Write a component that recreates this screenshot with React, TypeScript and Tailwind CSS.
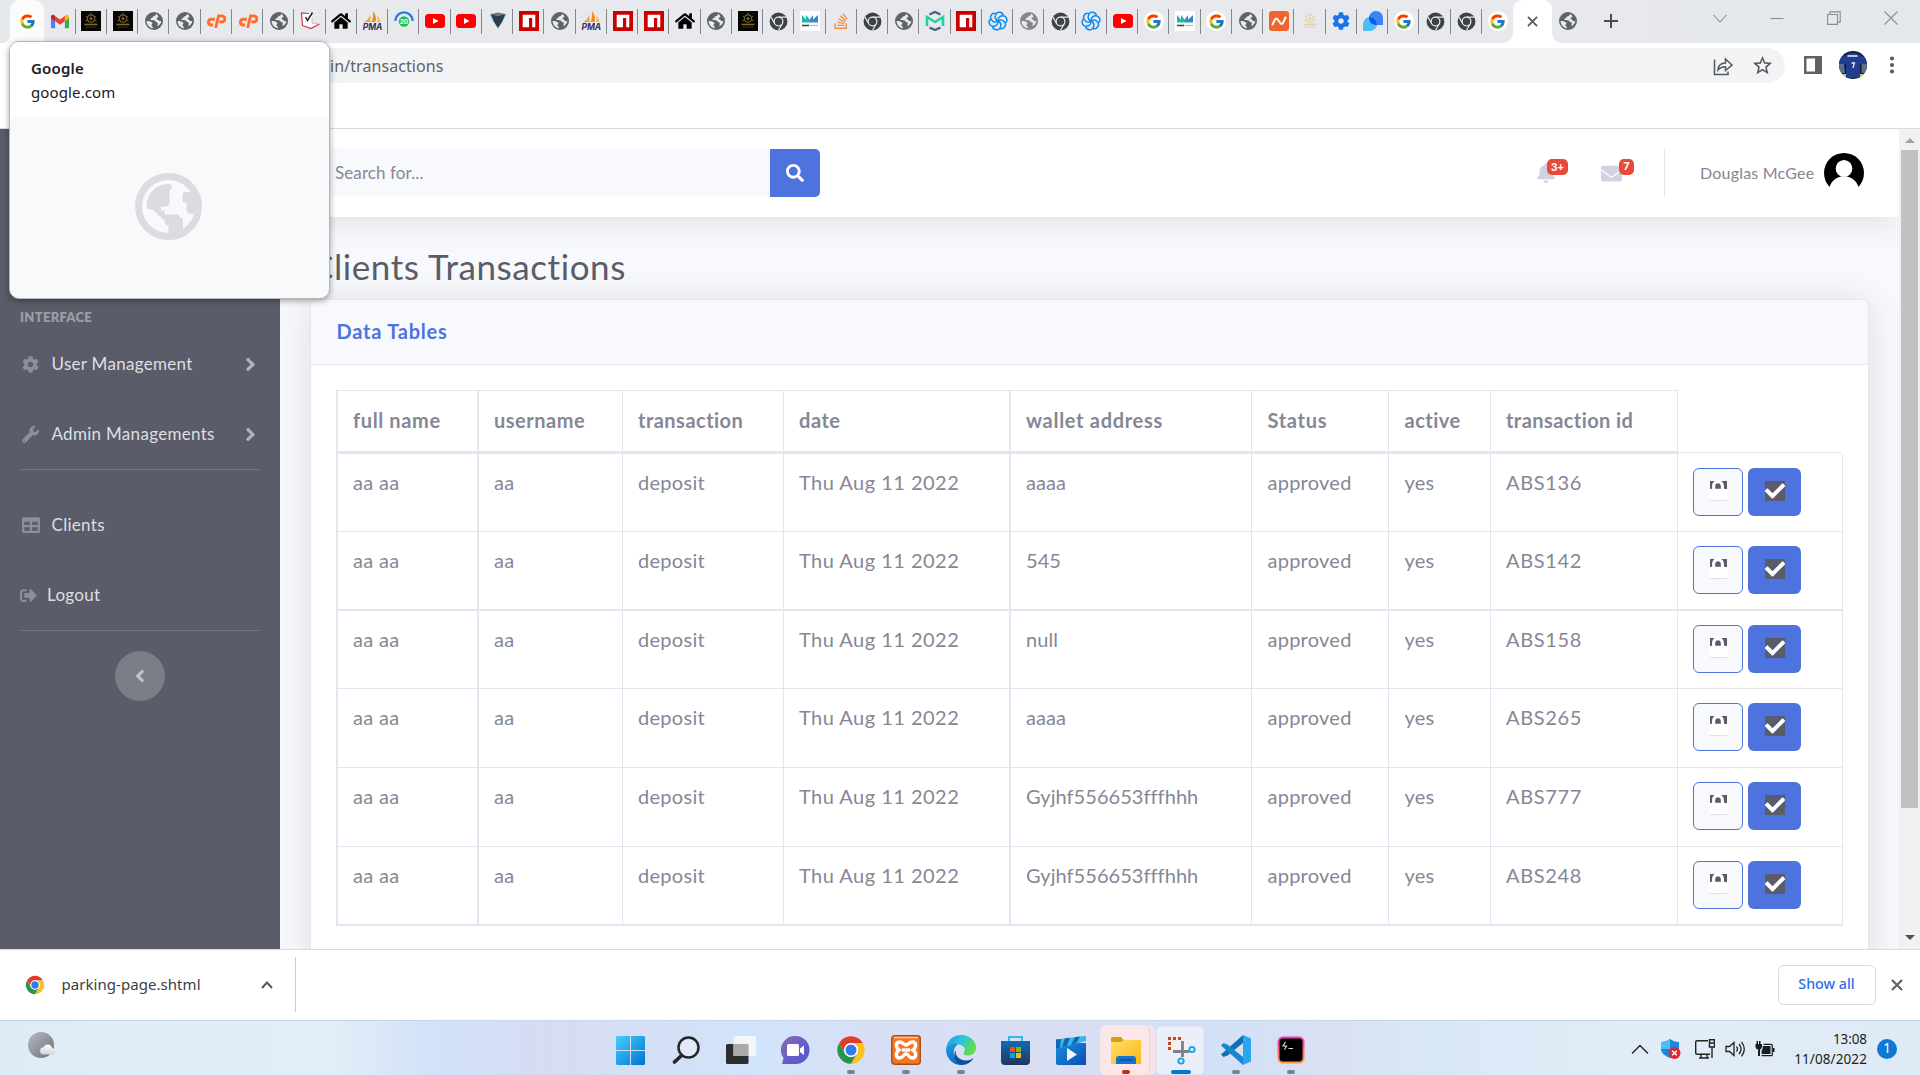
import React from "react";
import {
  FaAngleLeft,
  FaAngleRight,
  FaBell,
  FaCheck,
  FaCog,
  FaEnvelope,
  FaHome,
  FaLock,
  FaSearch,
  FaSignOutAlt,
  FaStackOverflow,
  FaTable,
  FaWrench,
} from "react-icons/fa";
import { FcGoogle } from "react-icons/fc";
import { MdStarBorder } from "react-icons/md";

/* ---------- favicons ---------- */

function Globe({ color = "#5f6368" }: { color?: string }) {
  return (
    <svg viewBox="0 0 20 20" className="size-5">
      <circle cx="10" cy="10" r="9" fill={color} />
      <path
        d="M12.2 2.8c-.2 1.6-1.3 2.4-2.9 2.6-.8.2-.9.9-.8 1.7-1.6-.1-2.3.8-1.9 2 1.9.4 4.3-.1 5 1.4.6.9 1.500.5 2 1.200.8.9-.3 2.300-.3 3.600 2.500-1.200 3.900-3.100 4-5.500-1 .7-2.300.5-2.700-.5-.5-1.200-1.900-.6-2-1.900 0-1 1-1.200 1.900-1.200C14.300 5 13.500 3.500 12.200 2.800zM2.600 10c1.800-.2 4.800.5 5.600 1.500.7 1-.6 1.800-.8 2.800-.1.900 1.400.9 1.800 2.900C5.500 17 2.700 14 2.600 10z"
        fill="#e8eaed"
      />
    </svg>
  );
}

function Gmail() {
  return (
    <svg viewBox="0 0 24 18" className="h-[15px] w-[18px]">
      <path d="M0 2.500V16.500A1.500 1.500 0 0 0 1.500 18H5.500V8z" fill="#4285f4" />
      <path d="M24 2.500V16.500A1.500 1.500 0 0 1 22.500 18H18.500V8z" fill="#34a853" />
      <path d="M18.500 1.500V8.500L24 4.400V2.500C24 .2 21.400-.8 19.800.5z" fill="#fbbc04" />
      <path d="M5.500 8.500V1.500L12 6.400 18.500 1.500V8.500L12 13.400z" fill="#ea4335" />
      <path d="M0 2.500V4.400L5.500 8.500V1.500L4.200.5C2.600-.8 0 .2 0 2.500z" fill="#c5221f" />
    </svg>
  );
}

function Emblem({ faint = false }: { faint?: boolean }) {
  const c = faint ? "#e3d3a4" : "#7d652a";
  return (
    <svg viewBox="0 0 20 20" className="size-5">
      {!faint && <rect width="20" height="20" fill="#050505" />}
      <circle cx="10" cy="7.500" r="3.700" fill="none" stroke={c} strokeWidth="1.200" />
      <circle cx="10" cy="7.500" r="1.500" fill={c} />
      <path d="M10 1.500v2M5 5l1 1M15 5l-1 1M4.500 10l1.500-.8M15.500 10l-1.500-.8" stroke={c} strokeWidth="1" />
      <path d="M3.500 13.500h13" stroke={c} strokeWidth="1.600" />
      <path d="M5 16.200h10" stroke={faint ? "#ecc9bd" : "#3d3218"} strokeWidth="1" />
    </svg>
  );
}

function Cpanel() {
  return (
    <svg viewBox="0 0 20 14" className="h-[14px] w-[20px]" fill="none" stroke="#ff6c2c" strokeWidth="2.900">
      <path d="M8.800 5.300H5.300A2.900 2.900 0 0 0 4.600 11H7" />
      <path d="M9.600 14L12.600 1.900H15.500A2.900 2.900 0 0 1 16.200 7.900H13.200" />
    </svg>
  );
}

function ListCheck() {
  return (
    <svg viewBox="0 0 20 20" className="size-5">
      <path d="M1.500 2h10.500v11l7.500-1-8 4.500-9-1z" fill="#fff" />
      <path d="M9 2.500L1.500 2l1 12.500 8.500 3 8.500-4.500" fill="none" stroke="#c8404a" strokeWidth="1.200" />
      <path d="M12 7v5l6 .500" fill="none" stroke="#dba5aa" strokeWidth=".8" />
      <path d="M5.500 6l2 3.500L12.500 1.500" fill="none" stroke="#222" strokeWidth="1.500" />
    </svg>
  );
}

function Pma() {
  return (
    <div className="flex h-[20px] w-[20px] flex-col items-center">
      <svg viewBox="0 0 20 13" className="h-[12px] w-[19px]">
        <path d="M7.500 0c.5 4-.5 8-6.500 12.500 3-.8 5-.8 7-.4z" fill="#f9a13a" />
        <path d="M10.500 0C13 3 15 8 13 12c-1.500-.4-3-.2-4 .2C10.500 8 11 4 10.500 0z" fill="#f28a1d" />
        <path d="M14.500 4c2.500 2.500 4 5.500 4 8.500-1-.5-2-.7-3.500-.5 1-3 .5-5.500-.5-8z" fill="#f9b25c" />
      </svg>
      <span className="font-[Inter] text-[8.500px] leading-[8px] font-bold text-[#33305e] italic">PMA</span>
    </div>
  );
}

function Ring() {
  return (
    <svg viewBox="0 0 20 20" className="size-5">
      <path d="M1.300 10A8.700 8.700 0 0 1 18.700 10" fill="none" stroke="#2c7be5" strokeWidth="2.300" />
      <circle cx="10" cy="10.500" r="5.200" fill="#1fbf4d" />
      <text x="10" y="12.900" textAnchor="middle" fontSize="6.500" fontWeight="700" fontFamily="Inter" fill="#fff">
        20
      </text>
    </svg>
  );
}

function Youtube() {
  return (
    <svg viewBox="0 0 20 20" className="size-5">
      <rect y="3" width="20" height="14" rx="3.500" fill="#f00" />
      <path d="M8 7l5.500 3L8 13z" fill="#fff" />
    </svg>
  );
}

function Gem() {
  return (
    <svg viewBox="0 0 20 20" className="size-5">
      <path d="M1 3.500L10 19 19 3.500z" fill="#a5e6ec" />
      <path d="M2.500 3L10 1.500 17.500 3 10 5z" fill="#6e7784" />
      <path d="M2.500 3L10 5l7.500-2L14 11l-4 6-4-6z" fill="#2e3a4e" />
    </svg>
  );
}

function Npm() {
  return (
    <svg viewBox="0 0 20 20" className="size-5">
      <rect width="20" height="20" fill="#cb0000" />
      <path d="M3.700 3.700h12.600v12.600h-3.100V7H10v9.300H3.700z" fill="#fff" />
    </svg>
  );
}

function ChromeMono() {
  return (
    <svg viewBox="0 0 48 48" className="size-[19px]">
      <circle cx="24" cy="24" r="22.500" fill="#3f4245" />
      <path d="M24 13h20M14.500 29.500l-9.500-16.500M33.500 29.500L24 46" stroke="#e8eaed" strokeWidth="3" />
      <circle cx="24" cy="24" r="11" fill="#3f4245" stroke="#e8eaed" strokeWidth="3.200" />
    </svg>
  );
}

function Chrome({ className }: { className: string }) {
  return (
    <svg viewBox="0 0 48 48" className={className}>
      <path d="M4.950 13A22 22 0 0 1 43.050 13H24A11 11 0 0 0 14.470 29.500Z" fill="#e33b2e" />
      <path d="M43.050 13A22 22 0 0 1 24 46L33.530 29.500A11 11 0 0 0 24 13Z" fill="#fcc31e" />
      <path d="M24 46A22 22 0 0 1 4.950 13L14.470 29.500A11 11 0 0 0 33.530 29.500Z" fill="#26964a" />
      <circle cx="24" cy="24" r="11.300" fill="#fff" />
      <circle cx="24" cy="24" r="8.800" fill="#2e7cee" />
    </svg>
  );
}

function Mailer() {
  return (
    <svg viewBox="0 0 20 20" className="size-5">
      <rect width="20" height="20" fill="#fff" />
      <path d="M2 4l4 4.500V4l4 5v2.500H2z" fill="#23b5a5" />
      <path d="M10 11.500V8l3-4v4.500L18 4v7.500z" fill="#3d86c6" />
      <path d="M2 14.500h7" stroke="#444" strokeWidth="1.600" />
      <path d="M9.500 14.500H18" stroke="#8ac9c0" strokeWidth="1.200" />
    </svg>
  );
}

function MailTrap() {
  return (
    <svg viewBox="0 0 20 20" className="size-5">
      <path d="M4.500 3.500L10 1l5.500 2.500M4.500 16.500L10 19l5.500-2.500" fill="none" stroke="#4d6180" strokeWidth="2.400" />
      <path d="M2 15V6l8 5 8-5v9" fill="none" stroke="#22d3a0" strokeWidth="2.600" />
    </svg>
  );
}

function Swirl() {
  return (
    <svg viewBox="0 0 20 20" className="size-5">
      {[0, 60, 120, 180, 240, 300].map((a) => (
        <path
          key={a}
          d="M10 10C6.500 8.500 6 4 9.500 1.500c3.500-.8 5.500 1 6 3"
          transform={`rotate(${a} 10 10)`}
          fill="none"
          stroke="#0b8df0"
          strokeWidth="1.500"
        />
      ))}
    </svg>
  );
}

function Google() {
  return (
    <div className="flex size-5 items-center justify-center rounded-full bg-white">
      <FcGoogle className="size-[17px]" />
    </div>
  );
}

function Orange() {
  return (
    <svg viewBox="0 0 20 20" className="size-5">
      <rect width="20" height="20" rx="3" fill="#f0642d" />
      <path
        d="M3.500 13.500L6 8.500Q7.300 6.300 8.700 8.500L11.300 12Q12.700 14 14 12L16.500 6.500"
        fill="none"
        stroke="#fff"
        strokeWidth="2"
        strokeLinecap="round"
      />
    </svg>
  );
}

function Drops() {
  return (
    <svg viewBox="0 0 20 20" className="size-5">
      <path d="M6 8A7 7 0 0 1 13 0c4 0 7 3 7 7v7h-7C9 14 6 11 6 8z" fill="#3f84f5" />
      <path d="M0 20v-7a7 7 0 0 1 7-7c4 0 7 3 7 7s-3 7-7 7z" fill="#4dbdfa" />
      <path d="M6 6.100c4-.6 8 2.500 8 7.900h-1c-4 0-7.500-3-7-7.900z" fill="#0e5bea" />
    </svg>
  );
}

const home = <FaHome className="size-5 text-black" />;
const stack = <FaStackOverflow className="size-[18px] text-[#ef9148]" />;
const gear = <FaCog className="size-[18px] text-[#1a73e8]" />;

const favicons: React.ReactNode[] = [
  <Gmail />, <Emblem />, <Emblem />, <Globe />, <Globe />, <Cpanel />, <Cpanel />, <Globe />, <ListCheck />, home,
  <Pma />, <Ring />, <Youtube />, <Youtube />, <Gem />, <Npm />, <Globe />, <Pma />, <Npm />, <Npm />,
  home, <Globe />, <Emblem />, <ChromeMono />, <Mailer />, stack, <ChromeMono />, <Globe />, <MailTrap />, <Npm />,
  <Swirl />, <Globe color="#85878a" />, <ChromeMono />, <Swirl />, <Youtube />, <Google />, <Mailer />, <Google />, <Globe />, <Orange />,
  <Emblem faint />, gear, <Drops />, <Google />, <ChromeMono />, <ChromeMono />, <Google />,
];

function TabStrip() {
  return (
    <div className="flex h-[43px] shrink-0 bg-gradient-to-r from-[#e8e9ed] from-80% to-[#e4e8eb] to-95%">
      <div className="flex h-[43px] w-[10px] items-end bg-[#fbfbfc]">
        <div className="h-full w-[10px] rounded-br-lg bg-[#e5e8eb]" />
      </div>
      <div className="flex w-[34.400px] items-start justify-center rounded-t-[10px] bg-[#fbfbfc] pt-[11px]">
        <Google />
      </div>
      <div className="flex h-[43px]">
        {favicons.map((icon, i) => (
          <div key={i} className="relative flex h-[42px] w-[31.250px] items-center justify-center">
            {icon}
            {i < favicons.length - 1 && <span className="absolute top-[9px] right-0 h-[25px] w-px bg-[#84878b]" />}
          </div>
        ))}
      </div>
      <div className="relative flex w-[39px] items-center justify-center rounded-t-[9px] bg-white">
        <svg viewBox="0 0 12 12" className="size-[11px]">
          <path d="M1 1l10 10M11 1L1 11" stroke="#55585c" strokeWidth="1.900" />
        </svg>
        <svg viewBox="0 0 10 10" className="absolute bottom-0 -left-[10px] size-[10px]">
          <path d="M10 0v10H0A10 10 0 0 0 10 0z" fill="#fff" />
        </svg>
        <svg viewBox="0 0 10 10" className="absolute -right-[10px] bottom-0 size-[10px]">
          <path d="M0 0v10h10A10 10 0 0 1 0 0z" fill="#fff" />
        </svg>
      </div>
      <div className="flex h-[42px] w-[32px] items-center justify-center">
        <Globe />
      </div>
      <div className="flex h-[42px] w-[54px] items-center justify-center">
        <svg viewBox="0 0 16 16" className="size-[16px]">
          <path d="M8 1v14M1 8h14" stroke="#4a4d51" strokeWidth="2" />
        </svg>
      </div>
      <div className="ml-auto flex items-start gap-[43px] pt-[11px] pr-[22px] text-[#8b8e91]">
        <svg viewBox="0 0 14 14" className="size-[14px]" fill="none" stroke="currentColor" strokeWidth="1.100">
          <path d="M.5 4l6.500 7 6.500-7" />
        </svg>
        <svg viewBox="0 0 14 14" className="size-[14px]" fill="none" stroke="currentColor" strokeWidth="1.100">
          <path d="M.5 7.500h13" />
        </svg>
        <svg viewBox="0 0 14 14" className="size-[14px]" fill="none" stroke="currentColor" strokeWidth="1.100">
          <path d="M.6 3.500h9.900v9.900H.6zM3 3.400V.9h10.200v10.200h-2.500" />
        </svg>
        <svg viewBox="0 0 14 14" className="size-[14px]" fill="none" stroke="currentColor" strokeWidth="1.100">
          <path d="M.5.5l13 13M13.500.5l-13 13" />
        </svg>
      </div>
    </div>
  );
}

function Toolbar() {
  return (
    <div className="flex h-[86px] shrink-0 items-start border-b border-[#d9dadd] bg-white pt-[5px]">
      <div className="ml-[120px] flex h-[35px] w-[1665px] items-center justify-between rounded-full bg-[#f1f3f4] pr-[11px] pl-[210px] font-['Noto_Sans']">
        <span className="text-[16px] tracking-[0.080px] text-[#5f6368]">in/transactions</span>
        <span className="flex items-center gap-[18px] text-[#54575b]">
          <svg viewBox="0 0 20 20" className="size-[20px]" fill="none" stroke="currentColor" strokeWidth="1.500">
            <path d="M1.500 3.500v15H15V15.500" />
            <path d="M5 14c.3-4.500 3-7 7.500-7V3l6.500 6-6.500 5.500v-3.800C9 10.600 7 11.600 5 14z" />
          </svg>
          <MdStarBorder className="size-[23px]" />
        </span>
      </div>
      <svg viewBox="0 0 18 18" className="mt-[8px] ml-[19px] size-[18px]">
        <path d="M0 0h18v18H0zM2.500 2.500v13h8.500v-13z" fill="#5f6368" fillRule="evenodd" />
      </svg>
      <svg viewBox="0 0 28 28" className="mt-[3px] ml-[17px] size-[28px]">
        <clipPath id="face">
          <circle cx="14" cy="14" r="14" />
        </clipPath>
        <g clipPath="url(#face)">
          <rect width="28" height="28" fill="#101c33" />
          <path d="M0 13l1-6 6-3 3-2h7l4 2 5 3 2 6-3 1-4-1v14H7V13l-4 1z" fill="#213d8f" />
          <path d="M0 13l5 0 1 9-6 0zM22.500 13h5.500v9h-5.500z" fill="#5a6f8a" />
          <path d="M0 23h7v5H0zM21 23h7v5h-7z" fill="#cdd07a" />
          <path d="M8.500 5h10" stroke="#b9c5e6" strokeWidth="1.800" />
          <path d="M12.500 12h3l-1.700 5" fill="none" stroke="#e9edf8" strokeWidth="1.300" />
        </g>
      </svg>
      <svg viewBox="0 0 6 18" className="mt-[8px] ml-[22px] h-[18px] w-[6px]" fill="#5a5d61">
        <circle cx="3" cy="2.500" r="2.100" />
        <circle cx="3" cy="9" r="2.100" />
        <circle cx="3" cy="15.500" r="2.100" />
      </svg>
    </div>
  );
}

function TabPreview() {
  return (
    <div className="absolute top-[41px] left-[8.500px] flex h-[257.500px] w-[321.500px] flex-col overflow-hidden rounded-[10px] border border-[#b4b6b8] bg-[#f8f9fb] font-['Noto_Sans'] shadow-[0_2px_6px_rgba(0,0,0,0.35)]">
      <div className="flex h-[75px] flex-col bg-white pt-[14px] pl-[21.500px] text-[#202124]">
        <span className="text-[15px] leading-[24px] font-semibold tracking-[0.200px]">Google</span>
        <span className="text-[15px] leading-[25px] tracking-[0.120px]">google.com</span>
      </div>
      <div className="flex flex-1 items-center justify-center pr-[1px] pb-[1px]">
        <svg viewBox="-33.500 -33.500 67 67" className="size-[67px]" fill="#dadce0">
          <circle r="30" fill="none" stroke="#dadce0" strokeWidth="7" />
          <path d="M-1-22.500Q3.500-23 3.500-19Q3.500-17.500 1-16V-4Q1 0-3.500 0H-7.500V4H-5L-3 8H9Q11 8 11.500 11Q14.500 11 14.500 14V24L0 29V26.500V19Q-4 19-4 14L-16 3H-19Q-22 3-22-1C-21-14-12-22-1-22.500z" />
          <path d="M21-14.500H17Q14-14.500 14-11V-6Q14-3.500 18-3.500V3Q18 7.500 25 7.500L29 0 26-14z" />
        </svg>
      </div>
    </div>
  );
}

/* ---------- admin page ---------- */

const sideText = "text-[17px] leading-6 tracking-[0.300px] text-[#dedfe1] [font-variant-ligatures:none]";

function Sidebar() {
  return (
    <aside className="flex w-[280px] shrink-0 flex-col bg-[#5a5c69] px-5 pt-[178px] text-[#8d8e97]">
      <div className="h-[20px] text-[13px] leading-[20px] font-extrabold tracking-[0.280px] text-[#9c9da5]">INTERFACE</div>
      <div className="mt-[25px] flex h-6 items-center">
        <FaCog className="ml-[2px] size-[17px]" />
        <span className={sideText + " ml-[12.500px]"}>User Management</span>
        <FaAngleRight className="mr-px ml-auto size-[17px] scale-125 text-[#b0b1b7]" />
      </div>
      <div className="mt-[46px] flex h-6 items-center">
        <FaWrench className="ml-[2px] size-[17px]" />
        <span className={sideText + " ml-[12.500px]"}>Admin Managements</span>
        <FaAngleRight className="mr-px ml-auto size-[17px] scale-125 text-[#b0b1b7]" />
      </div>
      <div className="mt-[23px] h-px bg-[#757681]" />
      <div className="mt-[43px] flex h-6 items-center">
        <FaTable className="ml-[2px] size-[18px]" />
        <span className={sideText + " ml-[11.500px]"}>Clients</span>
      </div>
      <div className="mt-[46px] flex h-6 items-center">
        <FaSignOutAlt className="size-[17px]" />
        <span className={sideText + " ml-[10px]"}>Logout</span>
      </div>
      <div className="mt-[23px] h-px bg-[#757681]" />
      <div className="mt-[20px] flex size-[50px] items-center justify-center self-center rounded-full bg-[#7b7d87]">
        <FaAngleLeft className="mr-px size-[18px] scale-110 text-[#c3c4c9]" />
      </div>
    </aside>
  );
}

function Topbar() {
  return (
    <header className="relative flex h-[88px] shrink-0 items-center bg-white pr-[35px] shadow-[0_3px_34px_rgba(58,59,69,0.150)]">
      <div className="ml-[30px] flex h-[48px]">
        <div className="flex w-[460px] items-center bg-[#f8f9fc] pl-[25px] text-[17px] tracking-[0.100px] text-[#858796]">
          Search for...
        </div>
        <div className="flex w-[50px] items-center justify-center rounded-r-[5px] bg-[#4e73df]">
          <FaSearch className="size-[18px] text-white" />
        </div>
      </div>
      <div className="relative ml-auto w-[18px]">
        <FaBell className="-ml-px size-[20px] text-[#d1d3e2]" />
        <span className="absolute -top-[4px] left-[10px] flex h-[16px] w-[21px] items-center justify-center rounded-[5px] bg-[#e74a3b] text-[11px] font-black text-white">
          3+
        </span>
      </div>
      <div className="relative ml-[46px] w-[21px]">
        <FaEnvelope className="size-[21px] text-[#d1d3e2]" />
        <span className="absolute -top-[4px] left-[18px] flex h-[16px] w-[15px] items-center justify-center rounded-[5px] bg-[#e74a3b] text-[11px] font-black text-white">
          7
        </span>
      </div>
      <div className="ml-[42px] h-[48px] w-px bg-[#e3e6f0]" />
      <span className="ml-[35px] w-[124px] text-[16px] tracking-[0.200px] text-[#858796] [font-variant-ligatures:none]">Douglas McGee</span>
      <svg viewBox="0 0 40 40" className="size-[40px]">
        <clipPath id="avatar">
          <rect width="40" height="34" />
        </clipPath>
        <g clipPath="url(#avatar)">
          <circle cx="20" cy="20" r="20" fill="#000" />
          <ellipse cx="20" cy="15.500" rx="8.300" ry="8.600" fill="#fff" />
          <path d="M5.500 34C8 27 13.500 23.300 20 23.300S32 27 34.500 34v2h-29z" fill="#fff" />
        </g>
      </svg>
    </header>
  );
}

type Column = { w: string; head: string; track: string; headTrack: string };
const columns: Column[] = [
  { w: "w-[141px] border-l-2 pl-[15px]", head: "full name", track: "tracking-[0.350px]", headTrack: "tracking-[0.620px]" },
  { w: "w-[145px] border-l-2 pl-[15px]", head: "username", track: "tracking-[0.350px]", headTrack: "tracking-[0.500px]" },
  { w: "w-[161px] border-l pl-[15px]", head: "transaction", track: "tracking-[0.300px]", headTrack: "tracking-[0.480px]" },
  { w: "w-[226px] border-l pl-[15px]", head: "date", track: "tracking-[0.480px]", headTrack: "tracking-[0.550px]" },
  { w: "w-[242px] border-l-2 pl-[15px]", head: "wallet address", track: "tracking-[0.050px]", headTrack: "tracking-[0.700px]" },
  { w: "w-[137px] border-l pl-[15.500px]", head: "Status", track: "tracking-[0.250px]", headTrack: "tracking-[0.700px]" },
  { w: "w-[102px] border-l pl-[15.500px]", head: "active", track: "tracking-[0.250px]", headTrack: "tracking-[0.500px]" },
  { w: "w-[187px] border-l pl-[15px]", head: "transaction id", track: "tracking-[0.650px]", headTrack: "tracking-[0.430px]" },
];

const records: { wallet: string; id: string; h: string }[] = [
  { wallet: "aaaa", id: "ABS136", h: "h-[78px] border-b" },
  { wallet: "545", id: "ABS142", h: "h-[79px] border-b-2" },
  { wallet: "null", id: "ABS158", h: "h-[78px] border-b" },
  { wallet: "aaaa", id: "ABS265", h: "h-[79px] border-b" },
  { wallet: "Gyjhf556653fffhhh", id: "ABS777", h: "h-[79px] border-b" },
  { wallet: "Gyjhf556653fffhhh", id: "ABS248", h: "h-[79px] border-b-2" },
];

function LockButton() {
  return (
    <div className="flex h-[48px] w-[50px] items-center justify-center rounded-[6px] border border-[#4e73df] bg-[#f8f9fc]">
      <div className="relative mb-[3px] flex h-[20px] w-[17px] items-center justify-center bg-[#5a5c69]">
        <div className="absolute -right-px bottom-[1px] -left-px h-[11px] rounded-[2px] bg-white" />
        <div className="absolute right-0 bottom-0 left-0 h-px bg-[#e0e0e4]" />
        <FaLock className="relative mb-[2px] size-[20px] shrink-0 text-white" />
      </div>
    </div>
  );
}

function ApproveButton() {
  return (
    <div className="flex h-[48px] w-[53px] items-center justify-center rounded-[6px] bg-[#4e73df]">
      <div className="mb-[2px] flex size-[20px] items-center justify-center bg-[#5a5c69]">
        <FaCheck className="mb-px size-[20px] shrink-0 text-white" />
      </div>
    </div>
  );
}

function DataTable() {
  return (
    <div className="text-[20px] text-[#858796]">
      <div className="flex h-[64px] w-[1342px] border-t border-r border-b-[3px] border-[#e3e6f0] font-bold">
        {columns.map((c) => (
          <div
            key={c.head}
            className={`${c.w} ${c.headTrack} flex shrink-0 items-center border-[#e3e6f0] pb-[3px] [font-variant-ligatures:none]`}
          >
            <span className="whitespace-nowrap">{c.head}</span>
          </div>
        ))}
      </div>
      {records.map((r, i) => {
        const values = ["aa aa", "aa", "deposit", "Thu Aug 11 2022", r.wallet, "approved", "yes", r.id];
        return (
          <div key={r.id} className={`${r.h} flex w-[1507px] border-r border-[#e3e6f0]`}>
            {values.map((v, j) => (
              <div
                key={j}
                className={`${columns[j].w} ${columns[j].track} shrink-0 border-[#e3e6f0] pt-[13px] leading-[30px] [font-variant-ligatures:none]`}
              >
                {v}
              </div>
            ))}
            <div className="relative flex grow gap-[5px] border-l border-[#e3e6f0] pt-[14px] pl-[15px]">
              {i === 0 && <div className="absolute -top-[2px] right-0 left-0 h-px bg-[#e3e6f0]" />}
              <LockButton />
              <ApproveButton />
            </div>
          </div>
        );
      })}
    </div>
  );
}

function ScrollBar() {
  return (
    <div className="flex w-[21px] shrink-0 flex-col items-center bg-[#f1f1f1]">
      <svg viewBox="0 0 10 5" className="mt-[9px] mb-[7px] h-[5px] w-[10px] shrink-0">
        <path d="M5 0l5 5H0z" fill="#a3a3a3" />
      </svg>
      <div className="h-[658px] w-[17px] shrink-0 bg-[#c1c1c1]" />
      <svg viewBox="0 0 10 5" className="mt-auto mb-[9px] h-[5px] w-[10px] shrink-0">
        <path d="M0 0h10L5 5z" fill="#505050" />
      </svg>
    </div>
  );
}

function AdminPage() {
  return (
    <div className="flex h-[820px] shrink-0 overflow-hidden font-[Lato]">
      <Sidebar />
      <div className="flex min-w-0 flex-1 flex-col overflow-hidden bg-[#f8f9fc]">
        <Topbar />
        <main className="flex-1 px-[30px]">
          <h1 className="mt-[28px] h-[54px] text-[35px] leading-[42px] font-normal tracking-[0.580px] text-[#5a5c69] [font-variant-ligatures:none]">
            Clients Transactions
          </h1>
          <section className="h-[700px] w-[1559px] overflow-hidden rounded-[7px] border border-[#e3e6f0] bg-white shadow-[0_3px_34px_rgba(58,59,69,0.150)]">
            <div className="flex h-[65px] items-center border-b border-[#e3e6f0] bg-[#f8f9fc] pb-[2px] pl-[25.500px] text-[20px] font-bold tracking-[0.780px] text-[#4e73df]">
              Data Tables
            </div>
            <div className="pt-[25px] pl-[25px]">
              <DataTable />
            </div>
          </section>
        </main>
      </div>
      <ScrollBar />
    </div>
  );
}

/* ---------- downloads shelf ---------- */

function DownloadShelf() {
  return (
    <div className="flex h-[71px] shrink-0 items-center border-t border-[#d9dadd] bg-white pb-px font-['Noto_Sans']">
      <div className="flex h-[55px] w-[296px] items-center border-r border-[#c9cbce] pl-[25px]">
        <Chrome className="size-[20px]" />
        <span className="ml-[16.500px] text-[15px] tracking-[0.050px] text-[#3c4043]">parking-page.shtml</span>
        <svg viewBox="0 0 12 8" className="mr-[22px] ml-auto h-[8px] w-[12px]">
          <path d="M1 7l5-5.500L11 7" fill="none" stroke="#55585c" strokeWidth="2" />
        </svg>
      </div>
      <div className="mr-px ml-auto flex h-[40px] w-[98px] items-center justify-center rounded-[6px] border border-[#dadce0] pr-px pb-px text-[14.300px] font-medium text-[#2b6de8]">
        Show all
      </div>
      <svg viewBox="0 0 12 12" className="mr-[17px] ml-[14px] size-[12px]">
        <path d="M1 1l10 10M11 1L1 11" stroke="#5f6368" strokeWidth="2.200" />
      </svg>
    </div>
  );
}

/* ---------- taskbar ---------- */

const apps: { icon: React.ReactNode; mark?: string }[] = [
  {
    icon: (
      <svg viewBox="0 0 29 29" className="size-[29px]">
        <linearGradient id="win" x1="0" y1="0" x2="1" y2="1">
          <stop offset="0" stopColor="#45d0fd" />
          <stop offset="1" stopColor="#0072d3" />
        </linearGradient>
        <path d="M1 0h13v14H0V1zM15 0h13l1 1v13H15zM0 15h14v14H1l-1-1zM15 15h14v13l-1 1H15z" fill="url(#win)" />
      </svg>
    ),
  },
  {
    icon: (
      <svg viewBox="0 0 28 28" className="size-[28px]" fill="none" stroke="#252729">
        <circle cx="16.500" cy="11.500" r="10" strokeWidth="2.500" fill="#e3eaf7" />
        <path d="M9.500 19.500L2.500 26" strokeWidth="3.600" strokeLinecap="round" />
      </svg>
    ),
  },
  {
    icon: (
      <svg viewBox="0 0 30 28" className="h-[28px] w-[30px]">
        <rect y="8" width="22.500" height="20" rx="1.500" fill="#2c2d2d" />
        <rect x="7.500" y="0" width="22.500" height="20" rx="1" fill="#f6f6f6" opacity="0.900" />
        <path d="M7.500 8h15v12h-15z" fill="#a9aaab" />
      </svg>
    ),
  },
  {
    icon: (
      <svg viewBox="0 0 29 29" className="size-[29px]">
        <linearGradient id="chat" x1="0" y1="0" x2="1" y2="1">
          <stop offset="0" stopColor="#8d66b5" />
          <stop offset="1" stopColor="#4a58d2" />
        </linearGradient>
        <path d="M14.500 0a14 14 0 0 1 0 28H1l1.500-6A14 14 0 0 1 14.500 0z" fill="url(#chat)" />
        <rect x="6" y="8" width="12" height="12" rx="1.500" fill="#fff" />
        <path d="M19 12.500l4-3v9.500l-4-3z" fill="#fff" />
      </svg>
    ),
  },
  { icon: <Chrome className="size-[30px]" />, mark: "w-[8px] bg-[#7d8290]" },
  {
    icon: (
      <svg viewBox="0 0 30 30" className="size-[30px]">
        <rect x=".7" y=".7" width="28.600" height="28.600" rx="3" fill="#f37623" stroke="#a3501c" strokeWidth="1.400" />
        <path d="M3 2.500h24" stroke="#f9c9a5" strokeWidth="1.500" />
        <path
          d="M8 7c5 0 4 3 7 3s2-3 7-3c4 1 3 6 0 8 3 2 4 7 0 8-5 0-4-4-7-4s-2 4-7 4c-4-1-3-6 0-8-3-2-4-7 0-8z"
          fill="none"
          stroke="#fff"
          strokeWidth="3.400"
        />
        <path d="M11 15h8" stroke="#fff" strokeWidth="3.400" />
      </svg>
    ),
    mark: "w-[8px] bg-[#7d8290]",
  },
  {
    icon: (
      <svg viewBox="0 0 30 30" className="size-[30px]">
        <defs>
          <linearGradient id="edgeTop" x1="0" y1="0" x2="1" y2="0.400">
            <stop offset="0" stopColor="#1b9de2" />
            <stop offset="0.550" stopColor="#2fc2df" />
            <stop offset="1" stopColor="#61de4c" />
          </linearGradient>
          <linearGradient id="edgeLow" x1="0" y1="0" x2="0.600" y2="1">
            <stop offset="0" stopColor="#1c9fe5" />
            <stop offset="1" stopColor="#0f66c2" />
          </linearGradient>
        </defs>
        <path d="M0 14.500C.5 6 7 0 15 0c9 0 15 6 15 12.500C30 18 26 20.500 22 20.500c-3.500 0-5-1-4-3 1.500-2 1.500-7-5-8C7.500 9 2 10.500 0 14.500z" fill="url(#edgeTop)" />
        <path d="M0 14.500C2 9 8 8 12 9.500c-5 2.500-6 11-.5 16.500 1.500 1.800 4 3.500 6.500 3.800C8 31.500 0 24 0 14.500z" fill="url(#edgeLow)" />
        <path d="M10 15c-1.500 6 4 10.500 10 10.500 3.500 0 6-1.500 7.500-2.500-2 4-6.500 7-11.500 7C10 29.500 6 21 10 15z" fill="#12519b" />
      </svg>
    ),
    mark: "w-[8px] bg-[#7d8290]",
  },
  {
    icon: (
      <svg viewBox="0 0 29 29" className="size-[29px]">
        <linearGradient id="store" x1="0" y1="0" x2="0" y2="1">
          <stop offset="0" stopColor="#0f6cb5" />
          <stop offset="1" stopColor="#20355c" />
        </linearGradient>
        <path d="M8 6V1h13v5" fill="none" stroke="#35b8ee" strokeWidth="2" />
        <path d="M0 5h29v20a4 4 0 0 1-4 4H4a4 4 0 0 1-4-4z" fill="url(#store)" />
        <path d="M9 11h5v5H9z" fill="#f25022" />
        <path d="M15 11h5v5h-5z" fill="#7fba00" />
        <path d="M9 17h5v5H9z" fill="#00a4ef" />
        <path d="M15 17h5v5h-5z" fill="#ffb900" />
      </svg>
    ),
  },
  {
    icon: (
      <svg viewBox="0 0 30 29" className="h-[29px] w-[30px]">
        <linearGradient id="film" x1="0" y1="0" x2="1" y2="1">
          <stop offset="0" stopColor="#1a90dd" />
          <stop offset="1" stopColor="#0a4eb0" />
        </linearGradient>
        <path d="M0 7h30v22H2a2 2 0 0 1-2-2z" fill="url(#film)" />
        <path d="M0 3.500L28 0h2v5L0 13z" fill="#35b6ee" />
        <path d="M0 3.500l5-.6-1 9L0 13zM9 2.300l5-.6-3 8-5 1.400zM19 1.200l5-.6-4 7-5 1.200z" fill="#1167b6" />
        <path d="M11 12l10 6.500L11 25z" fill="#f4f4f6" />
      </svg>
    ),
  },
  {
    icon: (
      <svg viewBox="0 0 30 27" className="h-[27px] w-[30px]">
        <linearGradient id="folder" x1="0" y1="0" x2="1" y2="1">
          <stop offset="0" stopColor="#ffdf6e" />
          <stop offset="1" stopColor="#fbb612" />
        </linearGradient>
        <path d="M0 1.500A1.500 1.500 0 0 1 1.500 0H10l3 3.500v5H0z" fill="#dd9b0c" />
        <path d="M0 5h10l3-2h17v24H0z" fill="url(#folder)" />
        <path d="M5 27v-5a3 3 0 0 1 3-3h14a3 3 0 0 1 3 3v5z" fill="#1374cf" />
        <path d="M8.500 23h13" stroke="#0b4a8e" strokeWidth="1.400" />
      </svg>
    ),
    mark: "w-[8px] bg-[#c42b1c]",
  },
  {
    icon: (
      <svg viewBox="0 0 30 30" className="size-[30px]">
        <path d="M2 2h17v17H2z" fill="#f1f0ef" />
        <path d="M2 3.500h14M3.500 7v9" stroke="#cf4313" strokeWidth="3" strokeDasharray="3 2" fill="none" />
        <path d="M16.500 6v16M7 16.500h16" stroke="#7b8189" strokeWidth="2.800" />
        <circle cx="26" cy="14.500" r="2.700" fill="none" stroke="#1c9ee6" strokeWidth="1.800" />
        <circle cx="15" cy="26" r="2.700" fill="none" stroke="#1c9ee6" strokeWidth="1.800" />
      </svg>
    ),
    mark: "w-[20px] bg-[#0078d4]",
  },
  {
    icon: (
      <svg viewBox="0 0 30 30" className="size-[30px]">
        <path d="M0 19.500L2.500 22l4-1.500L22 8V0z" fill="#0f6fb8" />
        <path d="M0 10.500L2.500 8l4 1.500L22 22v8z" fill="#1a86cf" />
        <path d="M22 0l8 3.500v23L22 30z" fill="#28a6ef" />
      </svg>
    ),
    mark: "w-[8px] bg-[#7d8290]",
  },
  {
    icon: (
      <svg viewBox="0 0 28 28" className="size-[28px]">
        <linearGradient id="term" x1="0" y1="0" x2="0" y2="1">
          <stop offset="0" stopColor="#f531b5" />
          <stop offset="1" stopColor="#fb9b3c" />
        </linearGradient>
        <rect x=".5" y=".5" width="27" height="27" rx="5.500" fill="url(#term)" />
        <rect x="2.500" y="2.500" width="23" height="23" rx="3.500" fill="#000" />
        <path d="M8.500 6l-2.500 4h3.500L7.500 13.500M11.500 12.500h4.500" stroke="#ddd" strokeWidth="1.200" fill="none" />
      </svg>
    ),
    mark: "w-[8px] bg-[#7d8290]",
  },
];

function Taskbar() {
  return (
    <div className="relative flex h-[55px] shrink-0 border-t border-[#c9d6e8] bg-[linear-gradient(90deg,#deebf5_0px,#e3edf7_330px,#d1e1fa_440px,#d8dbf3_545px,#d4dff5_640px,#d1e4fb_760px,#d8dff5_860px,#d9def2_1060px,#d3e0f7_1210px,#dae1f2_1340px,#d9e8f6_1430px,#e2ecf7_1650px,#deeaf6_1920px)] font-['Noto_Sans'] text-[#1d1f21]">
      <div className="flex w-[603px] pt-[11px] pl-[28px]">
        <svg viewBox="0 0 28 28" className="size-[28px]">
          <linearGradient id="moon" x1="0" y1="0" x2="1" y2="1">
            <stop offset="0" stopColor="#b6bcc3" />
            <stop offset="1" stopColor="#697079" />
          </linearGradient>
          <linearGradient id="cloud" x1="0" y1="0" x2="0" y2="1">
            <stop offset="0" stopColor="#fdfdfd" />
            <stop offset="1" stopColor="#d2d6db" />
          </linearGradient>
          <circle cx="13" cy="13" r="13" fill="url(#moon)" />
          <path d="M15 22.500a3.700 3.700 0 0 1 .5-7.300 4.600 4.600 0 0 1 8.600.8 3.300 3.300 0 0 1 0 6.500z" fill="url(#cloud)" />
        </svg>
      </div>
      <div className="flex">
        {apps.map((a, i) => (
          <div key={i} className="relative flex w-[55px] justify-center">
            {i === 9 && (
              <div className="absolute top-[4px] left-[2px] h-[50px] w-[50px] rounded-[6px] border-r border-[#e9d3dc] bg-[#fbe6e8] shadow-[5px_0_0_#f8e3e9]" />
            )}
            {i === 10 && <div className="absolute top-[5px] left-[3px] h-[49px] w-[48px] rounded-[5px] border border-[#e1e6f0] bg-[#ebeff9]" />}
            <div className="relative flex h-[58px] items-center justify-center">{a.icon}</div>
            {a.mark && <span className={`${a.mark} absolute bottom-px h-[4px] rounded-full`} />}
          </div>
        ))}
      </div>
      <div className="ml-auto flex items-center pt-[2px] pr-[23px]">
        <svg viewBox="0 0 18 10" className="h-[10px] w-[18px]">
          <path d="M1 9.500l8-8 8 8" fill="none" stroke="#222" strokeWidth="1.400" />
        </svg>
        <svg viewBox="0 0 20 20" className="ml-[12px] size-[20px]">
          <path d="M0 3c4 0 6-1 9-3 3 2 5 3 9 3v7c0 4-4 7-9 9-5-2-9-5-9-9z" fill="#1c86d8" />
          <path d="M0 3c4 0 6-1 9-3v10H0z" fill="#4cc0f4" />
          <circle cx="13.500" cy="14" r="6" fill="#d92b36" />
          <path d="M11.200 11.700l4.600 4.600M15.800 11.700l-4.600 4.600" stroke="#fff" strokeWidth="1.500" />
        </svg>
        <svg viewBox="0 0 20 20" className="ml-[14px] size-[20px]" fill="none" stroke="#222" strokeWidth="1.400">
          <path d="M13 1.700H2A1.300 1.300 0 0 0 .7 3v11A1.300 1.300 0 0 0 2 15.300h13M6 15.500V19M12 15.500V19M4 19h10M17 8v11" />
          <path d="M14.500.8h5V8h-5zM14.500 4h5" />
        </svg>
        <svg viewBox="0 0 20 18" className="ml-[10px] h-[18px] w-[20px]" fill="none" stroke="#222" strokeWidth="1.300">
          <path d="M1 6.500v5h3.500L9 15.500v-13L4.500 6.500zM11.500 6.500c1.200 1.500 1.200 3.500 0 5M14 4c2.500 3 2.500 7 0 10M16.500 1.800c3.500 4.500 3.500 10 0 14.500" />
        </svg>
        <svg viewBox="0 0 20 16" className="ml-[10px] h-[16px] w-[20px]" fill="#1b1c1d">
          <path d="M1.500 0H3v3h1V0h1.500v3H7v3a2.500 2.500 0 0 1-2 2.400V15H3V8.400A2.500 2.500 0 0 1 .5 6V3h1z" />
          <path d="M7.800 5h7.700v8H6.600V9.500A4 4 0 0 0 7.800 7z" />
          <path d="M8.500 3.300H16a1.300 1.300 0 0 1 1.300 1.300v8.800a1.300 1.300 0 0 1-1.300 1.300H6.500" fill="none" stroke="#1b1c1d" strokeWidth="1.200" />
          <path d="M17.500 7h2v4h-2z" />
        </svg>
        <div className="ml-[17px] w-[75px] text-right text-[13.500px] leading-[20px]">
          <div className="tracking-[-0.100px]">13:08</div>
          <div className="tracking-[0.100px]">11/08/2022</div>
        </div>
        <div className="ml-[10px] flex size-[20px] items-center justify-center rounded-full bg-[#0f78d4] text-[13.500px] leading-none text-white">1</div>
      </div>
    </div>
  );
}

export default function App() {
  return (
    <div className="relative flex h-[1075px] w-[1920px] flex-col overflow-hidden bg-white">
      <TabStrip />
      <Toolbar />
      <AdminPage />
      <DownloadShelf />
      <Taskbar />
      <TabPreview />
    </div>
  );
}
